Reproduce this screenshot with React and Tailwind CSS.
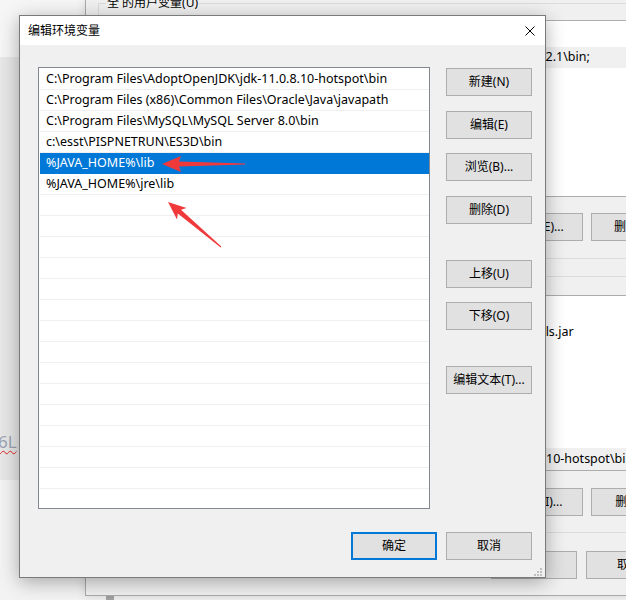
import React from "react";

const FONT = "font-['Noto_Sans','Noto_Sans_CJK_SC',sans-serif]";

const paths = [
  "C:\\Program Files\\AdoptOpenJDK\\jdk-11.0.8.10-hotspot\\bin",
  "C:\\Program Files (x86)\\Common Files\\Oracle\\Java\\javapath",
  "C:\\Program Files\\MySQL\\MySQL Server 8.0\\bin",
  "c:\\esst\\PISPNETRUN\\ES3D\\bin",
  "%JAVA_HOME%\\lib",
  "%JAVA_HOME%\\jre\\lib",
];
const rows = [...paths, ...Array(15).fill("")];

function WinButton({ children, className = "", primary = false }) {
  return (
    <div
      className={`w-[86px] h-[28px] shrink-0 bg-[#e1e1e1] flex items-center justify-center text-[12px] text-black ${
        primary ? "border-2 border-[#0078d7]" : "border border-[#adadad]"
      } ${className}`}
    >
      {children}
    </div>
  );
}

function EnvWindow() {
  return (
    <div className="absolute left-[85px] top-0 w-[620px] h-[596px] bg-[#f0f0f0] border-l border-b border-[#a9a9a9] shadow-[0_0_10px_rgba(0,0,0,0.12)] flex flex-col pl-[12px]">
      {/* user variables group */}
      <div className="relative mt-[3px] h-[256px] w-[640px] border border-[#dcdcdc] flex flex-col">
        <div className="absolute left-[7px] top-[-9px] px-[1px] bg-[#f0f0f0] text-[12px] leading-[16px] text-black">
          全 的用户变量(U)
        </div>
        <div className="mt-[16px] ml-[11px] w-[600px] h-[177px] border border-[#adadad] bg-white flex flex-col">
          <div className="h-[26px]" />
          <div className="h-[21px] bg-[#f0f0f0] flex items-center pl-[424px] text-[12.5px] text-black whitespace-nowrap">
            1.2.1\bin;
          </div>
        </div>
        <div className="mt-[16px] ml-[304px] flex gap-[8px]">
          <WinButton>新建(N)...</WinButton>
          <WinButton>编辑(E)...</WinButton>
          <WinButton>删除(D)</WinButton>
        </div>
      </div>
      {/* system variables group */}
      <div className="mt-[17px] h-[257px] w-[640px] border border-[#dcdcdc] flex flex-col">
        <div className="mt-[18px] ml-[11px] w-[600px] h-[176px] border border-[#adadad] bg-white flex flex-col">
          <div className="h-[26px]" />
          <div className="h-[21px] flex items-center pl-[415px] text-[12.5px] text-black whitespace-nowrap">
            tools.jar
          </div>
          <div className="h-[105px]" />
          <div className="h-[22px] bg-[#f0f0f0] flex items-center pl-[435px] text-[12.5px] text-black whitespace-nowrap">
            10-hotspot\bin
          </div>
        </div>
        <div className="mt-[17px] ml-[304px] flex gap-[8px]">
          <WinButton>新建(W)...</WinButton>
          <WinButton>编辑(I)...</WinButton>
          <WinButton>删除(L)</WinButton>
        </div>
      </div>
      <div className="mt-[18px] ml-[393px] flex gap-[9px]">
        <WinButton>确定</WinButton>
        <WinButton>取消</WinButton>
      </div>
    </div>
  );
}

function Dialog() {
  return (
    <div className="absolute left-[19px] top-[15px] w-[527px] h-[563px] border border-[#7a7a7a] bg-[#f0f0f0] shadow-[0_4px_18px_rgba(0,0,0,0.32)] flex flex-col">
      <div className="h-[29px] bg-white flex items-center justify-between pl-[8px] pr-[10px]">
        <span className="text-[12px] text-black leading-none">编辑环境变量</span>
        <svg width="10" height="10" viewBox="0 0 10 10" className="block">
          <path d="M0.5 0.5 L9.5 9.5 M9.5 0.5 L0.5 9.5" stroke="#000" strokeWidth="1" fill="none" />
        </svg>
      </div>
      <div className="flex-1 flex flex-col pl-[18px] pr-[13px] pt-[22px]">
        <div className="flex gap-[16px]">
          <div className="w-[392px] h-[442px] border border-[#828790] bg-white overflow-hidden flex flex-col pt-[1px]">
            {rows.map((t, i) => {
              const sel = i === 4;
              return (
                <div
                  key={i}
                  className={`h-[21px] shrink-0 ml-[1px] pl-[6px] flex items-center text-[12.5px] whitespace-nowrap border-b ${
                    sel
                      ? "bg-[#0078d7] border-[#0078d7] text-white"
                      : "border-[#efefef] text-black"
                  }`}
                >
                  {t}
                </div>
              );
            })}
          </div>
          <div className="w-[86px] flex flex-col">
            <WinButton className="mt-[1px]">新建(N)</WinButton>
            <WinButton className="mt-[15px]">编辑(E)</WinButton>
            <WinButton className="mt-[14px]">浏览(B)...</WinButton>
            <WinButton className="mt-[15px]">删除(D)</WinButton>
            <WinButton className="mt-[36px]">上移(U)</WinButton>
            <WinButton className="mt-[14px]">下移(O)</WinButton>
            <WinButton className="mt-[36px]">编辑文本(T)...</WinButton>
          </div>
        </div>
        <div className="flex justify-end gap-[9px] mt-[23px]">
          <WinButton primary>确定</WinButton>
          <WinButton>取消</WinButton>
        </div>
      </div>
      <svg className="absolute right-[3px] bottom-[1px]" width="8" height="8" viewBox="0 0 8 8">
        <rect x="6" y="0" width="2" height="2" fill="#bfbfbf" />
        <rect x="3" y="3" width="2" height="2" fill="#bfbfbf" />
        <rect x="6" y="3" width="2" height="2" fill="#bfbfbf" />
        <rect x="0" y="6" width="2" height="2" fill="#bfbfbf" />
        <rect x="3" y="6" width="2" height="2" fill="#bfbfbf" />
        <rect x="6" y="6" width="2" height="2" fill="#bfbfbf" />
      </svg>
    </div>
  );
}

export default function App() {
  return (
    <div className={`relative w-[626px] h-[600px] overflow-hidden bg-[#f3f3f3] ${FONT}`}>
      {/* back-most application */}
      <div className="w-full h-full flex flex-col">
        <div className="h-[57px] bg-[#f6f6f6]" />
        <div className="h-[423px] bg-[#e7e7e7] flex flex-col">
          <div className="mt-[375px] -ml-[2px] text-[17px] leading-[20px] text-[#9ca4b4] underline decoration-wavy decoration-[#e02020] decoration-1 underline-offset-2">
            6L
          </div>
        </div>
        <div className="flex-1 bg-[#f3f3f3] flex flex-col">
          <div className="mt-[116px] ml-[106px] w-[8px] h-[4px] bg-[#a6a6a6]" />
        </div>
      </div>

      <EnvWindow />
      <Dialog />

      {/* red annotation arrows */}
      <svg className="absolute inset-0 pointer-events-none" width="626" height="600" viewBox="0 0 626 600">
        <polygon
          points="162,164 181,156 179,161.5 245,163.5 245,164.5 179,166.5 181,172"
          fill="#f0393b"
        />
        <polygon
          points="168,202 186.5,208 181,209.8 221.3,246.6 220.7,247.4 177.8,213.6 177,219.5"
          fill="#f0393b"
        />
      </svg>
    </div>
  );
}
